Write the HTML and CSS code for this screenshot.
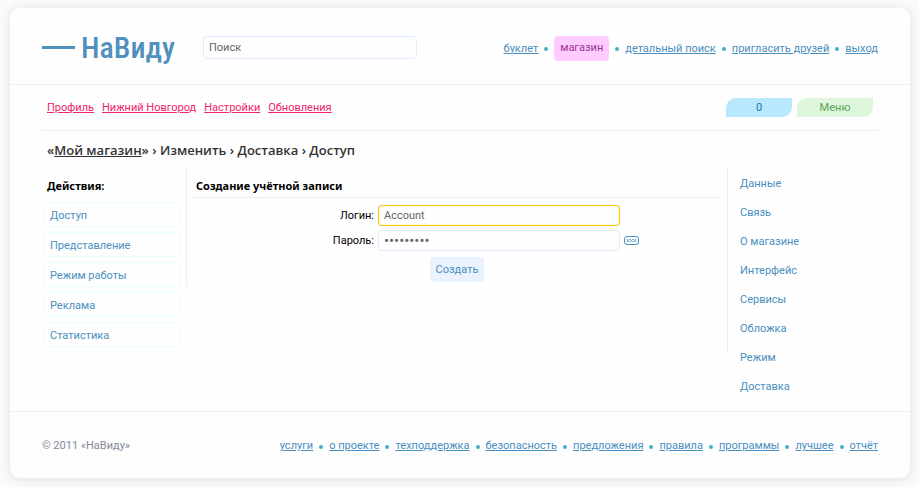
FILE: index.html
```html
<!DOCTYPE html>
<html lang="ru">
<head>
<meta charset="utf-8">
<title>НаВиду</title>
<link rel="stylesheet" href="styles.css">
</head>
<body>
<div class="card">
  <header class="header">
    <a class="logo" href="#"><span class="logo-dash"></span>НаВиду</a>
    <input class="field search" type="text" value="Поиск" aria-label="Поиск">
    <nav class="links top-links">
      <a href="#">буклет</a><i></i><a class="current" href="#">магазин</a><i></i><a href="#">детальный поиск</a><i></i><a href="#">пригласить друзей</a><i></i><a href="#">выход</a>
    </nav>
  </header>
  <div class="subnav">
    <nav class="profile-links">
      <a href="#">Профиль</a>
      <a href="#">Нижний Новгород</a>
      <a href="#">Настройки</a>
      <a href="#">Обновления</a>
    </nav>
    <div class="pills">
      <button class="pill pill-count" type="button">0</button>
      <button class="pill pill-menu" type="button">Меню</button>
    </div>
  </div>
  <h1 class="crumbs">«<a href="#">Мой магазин</a>» › Изменить › Доставка › Доступ</h1>
  <div class="columns">
    <aside class="actions">
      <h2>Действия:</h2>
      <ul>
        <li><a href="#">Доступ</a></li>
        <li><a href="#">Представление</a></li>
        <li><a href="#">Режим работы</a></li>
        <li><a href="#">Реклама</a></li>
        <li><a href="#">Статистика</a></li>
      </ul>
    </aside>
    <main class="main">
      <h2>Создание учётной записи</h2>
      <form class="form">
        <label for="login">Логин:</label>
        <input class="field active" id="login" type="text" value="Account">
        <span></span>
        <label for="password">Пароль:</label>
        <input class="field" id="password" type="password" value="123456789">
        <button class="reveal" type="button" aria-label="Показать пароль">
          <svg width="15" height="9" viewBox="0 0 15 9" fill="none" stroke="#4a8fbe">
            <rect x=".5" y=".5" width="14" height="8" rx="2.5"/>
            <path d="M2.500 3l3 3m0-3l-3 3M6 3l3 3m0-3L6 6M9.500 3l3 3m0-3l-3 3" stroke-width=".8"/>
          </svg>
        </button>
        <button class="submit" type="submit">Создать</button>
      </form>
    </main>
    <aside class="sections">
      <ul>
        <li><a href="#">Данные</a></li>
        <li><a href="#">Связь</a></li>
        <li><a href="#">О магазине</a></li>
        <li><a href="#">Интерфейс</a></li>
        <li><a href="#">Сервисы</a></li>
        <li><a href="#">Обложка</a></li>
        <li><a href="#">Режим</a></li>
        <li><a href="#">Доставка</a></li>
      </ul>
    </aside>
  </div>
  <footer class="footer">
    <span>© 2011 «НаВиду»</span>
    <nav class="links">
      <a href="#">услуги</a><i></i><a href="#">о проекте</a><i></i><a href="#">техподдержка</a><i></i><a href="#">безопасность</a><i></i><a href="#">предложения</a><i></i><a href="#">правила</a><i></i><a href="#">программы</a><i></i><a href="#">лучшее</a><i></i><a href="#">отчёт</a>
    </nav>
  </footer>
</div>
</body>
</html>
```
FILE: styles.css
```css
* { box-sizing: border-box; }

body {
  margin: 0;
  padding: 8px 9px 9px 10px;
  background: #fafafa;
  font: 11px/16px Roboto, "Noto Sans", sans-serif;
  color: #000;
}

a { color: #4a8fbe; }
ul { list-style: none; margin: 0; padding: 0; }
li a { text-decoration: none; }
h1, h2 { margin: 0; }
button { border: 0; padding: 0; font: inherit; cursor: pointer; }

.card {
  background: #fefefe;
  border-radius: 10px;
  box-shadow: 0 1px 12px rgba(0, 0, 0, .1);
}

.header {
  display: flex;
  align-items: center;
  height: 77px;
  padding: 3px 32px 0;
  border-bottom: 1px solid #e8f1fd;
}

.logo {
  display: flex;
  align-items: center;
  gap: 6px;
  width: 161px;
  flex: none;
  font: 500 30px/40px "Roboto Condensed", "Liberation Sans Narrow", Roboto, sans-serif;
  color: #5090bd;
  text-decoration: none;
}
.logo-dash { width: 33px; height: 3px; background: #5090bd; flex: none; }

.field {
  height: 21px;
  padding: 0 5px;
  border: 1px solid #ddedff;
  border-radius: 4px;
  background: #fefefe;
  font: inherit;
  color: #666;
  outline: 0;
}
.search { width: 214px; height: 23px; }
.active { border-color: #fc0; box-shadow: inset 0 0 1px #fc0, 0 0 1px #a9cdf5; }
.field[type="password"] { font-size: 15px; }

.links { display: flex; align-items: center; margin-left: auto; padding-top: 2px; }
.links i {
  width: 4px;
  height: 4px;
  margin: 1px 6px 0;
  border-radius: 50%;
  background: #47afcc;
}
.links .current {
  padding: 4px 6px 5px;
  border-radius: 4px;
  background: #fcf;
  color: #939;
  text-decoration: none;
}

.subnav {
  display: flex;
  align-items: center;
  justify-content: space-between;
  height: 46px;
  margin: 0 32px;
  padding: 0 5px;
  border-bottom: 1px solid #ededed;
}
.profile-links { display: flex; gap: 8px; }
.profile-links a { color: #f0246a; }
.pills { display: flex; gap: 5px; }
.pill { height: 19px; padding-top: 1px; border-radius: 10px 0; }
.pill-count { width: 66px; background: #b8e8fb; color: #2371ad; }
.pill-menu { width: 76px; background: #def6dc; color: #5aa552; }

.crumbs {
  height: 38px;
  margin: 0 37px;
  font: 600 13px/38px "Open Sans", "Noto Sans", sans-serif;
  color: #333;
}
.crumbs a { color: inherit; }

.columns {
  display: grid;
  grid-template-columns: 145px 1fr 151px;
  padding: 0 32px 10px;
}
.columns h2 {
  height: 29px;
  padding: 9px 4px 0;
  font: 700 11px/16px "Noto Sans", sans-serif;
}
.actions {
  padding: 0 7px 0 2px;
  background: linear-gradient(#ededed, #ededed) right top / 1px 117px no-repeat;
}
.actions h2 { padding-left: 3px; }
.actions ul { display: grid; gap: 5px; margin-top: 4px; }
.actions li {
  height: 25px;
  padding: 0 5px;
  border: 1px solid #e8feff;
  line-height: 25px;
}
.main { padding: 0 5px; }
.main h2 { border-bottom: 1px solid #ededed; }

.form {
  display: grid;
  grid-template-columns: 182px 242px 1fr;
  gap: 4px;
  margin-top: 7px;
  align-items: center;
}
.form label { text-align: right; }
.reveal { display: flex; width: 15px; background: none; }
.submit {
  grid-column: 1 / -1;
  justify-self: center;
  height: 25px;
  margin-top: 2px;
  padding: 1px 6px 0;
  border-radius: 4px;
  background: #eaf2fe;
  color: #4a8fbe;
}

.sections {
  padding-left: 13px;
  background: linear-gradient(#ededed, #ededed) left top / 1px 183px no-repeat;
}
.sections li { line-height: 29px; }

.footer {
  display: flex;
  align-items: center;
  height: 67px;
  padding: 2px 32px 0;
  border-top: 1px solid #e8f1fd;
  color: #85889b;
}
.footer .links { padding-top: 0; }
```
